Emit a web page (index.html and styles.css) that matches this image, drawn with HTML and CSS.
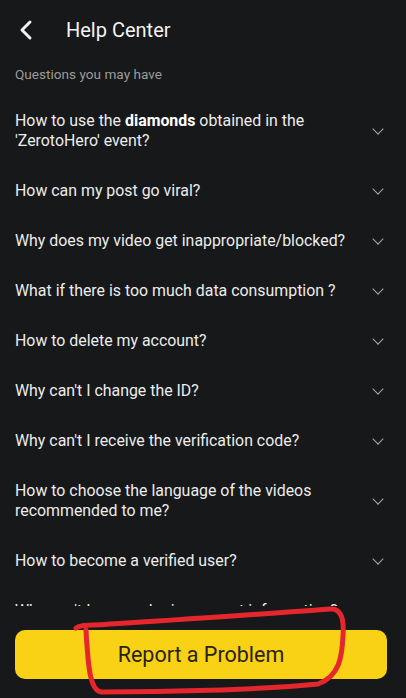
FILE: index.html
```html
<!DOCTYPE html>
<html>
<head>
<meta charset="utf-8">
<link rel="stylesheet" href="styles.css">
</head>
<body>
<div class="screen">
  <header class="topbar">
    <svg class="back" width="16" height="22" viewBox="0 0 16 22"><path d="M12 3 L4 11 L12 19" fill="none" stroke="#f2f2f2" stroke-width="3" stroke-linecap="round" stroke-linejoin="round"/></svg>
    <h1 class="title">Help Center</h1>
  </header>
  <div class="subtitle">Questions you may have</div>
  <ul class="list">
    <li class="item two"><span class="q">How to use the <b>diamonds</b> obtained in the 'ZerotoHero' event?</span><span class="chev"></span></li>
    <li class="item"><span class="q">How can my post go viral?</span><span class="chev"></span></li>
    <li class="item"><span class="q">Why does my video get inappropriate/blocked?</span><span class="chev"></span></li>
    <li class="item"><span class="q">What if there is too much data consumption ?</span><span class="chev"></span></li>
    <li class="item"><span class="q">How to delete my account?</span><span class="chev"></span></li>
    <li class="item"><span class="q">Why can't I change the ID?</span><span class="chev"></span></li>
    <li class="item"><span class="q">Why can't I receive the verification code?</span><span class="chev"></span></li>
    <li class="item two"><span class="q">How to choose the language of the videos recommended to me?</span><span class="chev"></span></li>
    <li class="item"><span class="q">How to become a verified user?</span><span class="chev"></span></li>
    <li class="item"><span class="q">Why can't I see my login account information?</span><span class="chev"></span></li>
  </ul>
  <footer class="footer">
    <button class="report">Report a Problem</button>
    <svg class="mark" width="406" height="92" viewBox="0 0 406 92"><path d="M76 22 C 82 18, 90 20, 110 18 C 180 14, 260 8, 330 3 C 342 2, 344 14, 343 30 C 342 50, 340 70, 318 78 C 260 84, 160 86, 102 86 C 90 86, 88 60, 86 24" fill="none" stroke="#e5272d" stroke-width="5" stroke-linecap="round" stroke-linejoin="round"/></svg>
  </footer>
</div>
</body>
</html>
```
FILE: styles.css
```css
* { box-sizing: border-box; }
html, body { margin: 0; padding: 0; background: #161819; }
.screen {
  width: 406px; height: 698px; overflow: hidden;
  background: #161819; color: #ececec;
  font-family: Roboto, "Noto Sans", sans-serif;
  display: flex; flex-direction: column;
  position: relative;
}
.topbar {
  height: 60px; display: flex; align-items: center;
  padding: 0 0 0 18px; gap: 32px;
}
.back { display: block; }
.title { margin: 0; font-size: 20px; font-weight: 400; color: #f4f4f4; }
.subtitle {
  padding: 6px 15px 0; height: 36px; font-size: 13.6px; color: #9c9c9c;
}
.list { list-style: none; margin: 0; padding: 0; flex: 1; overflow: hidden; }
.item {
  display: flex; align-items: center; justify-content: space-between;
  height: 50px; padding: 0 24px 0 15px;
}
.item.two { height: 70px; }
.q { font-size: 15.9px; line-height: 20px; color: #ececec; max-width: 335px; }
.q b { font-weight: 700; color: #ffffff; }
.chev {
  width: 8px; height: 8px; flex: none;
  border-right: 1.5px solid #a8a8a8; border-bottom: 1.5px solid #a8a8a8;
  transform: rotate(45deg); margin-top: -4px;
}
.footer {
  height: 92px; flex: none; background: #161819;
  padding: 24px 19px 0 15px; position: relative;
}
.report {
  width: 100%; height: 49px; border: none; border-radius: 10px;
  background: #f9d215; color: #2a2212;
  font-family: Roboto, "Noto Sans", sans-serif; font-size: 21.5px;
  display: flex; align-items: center; justify-content: center;
}
.mark { position: absolute; left: 0; top: 0; pointer-events: none; }
```
